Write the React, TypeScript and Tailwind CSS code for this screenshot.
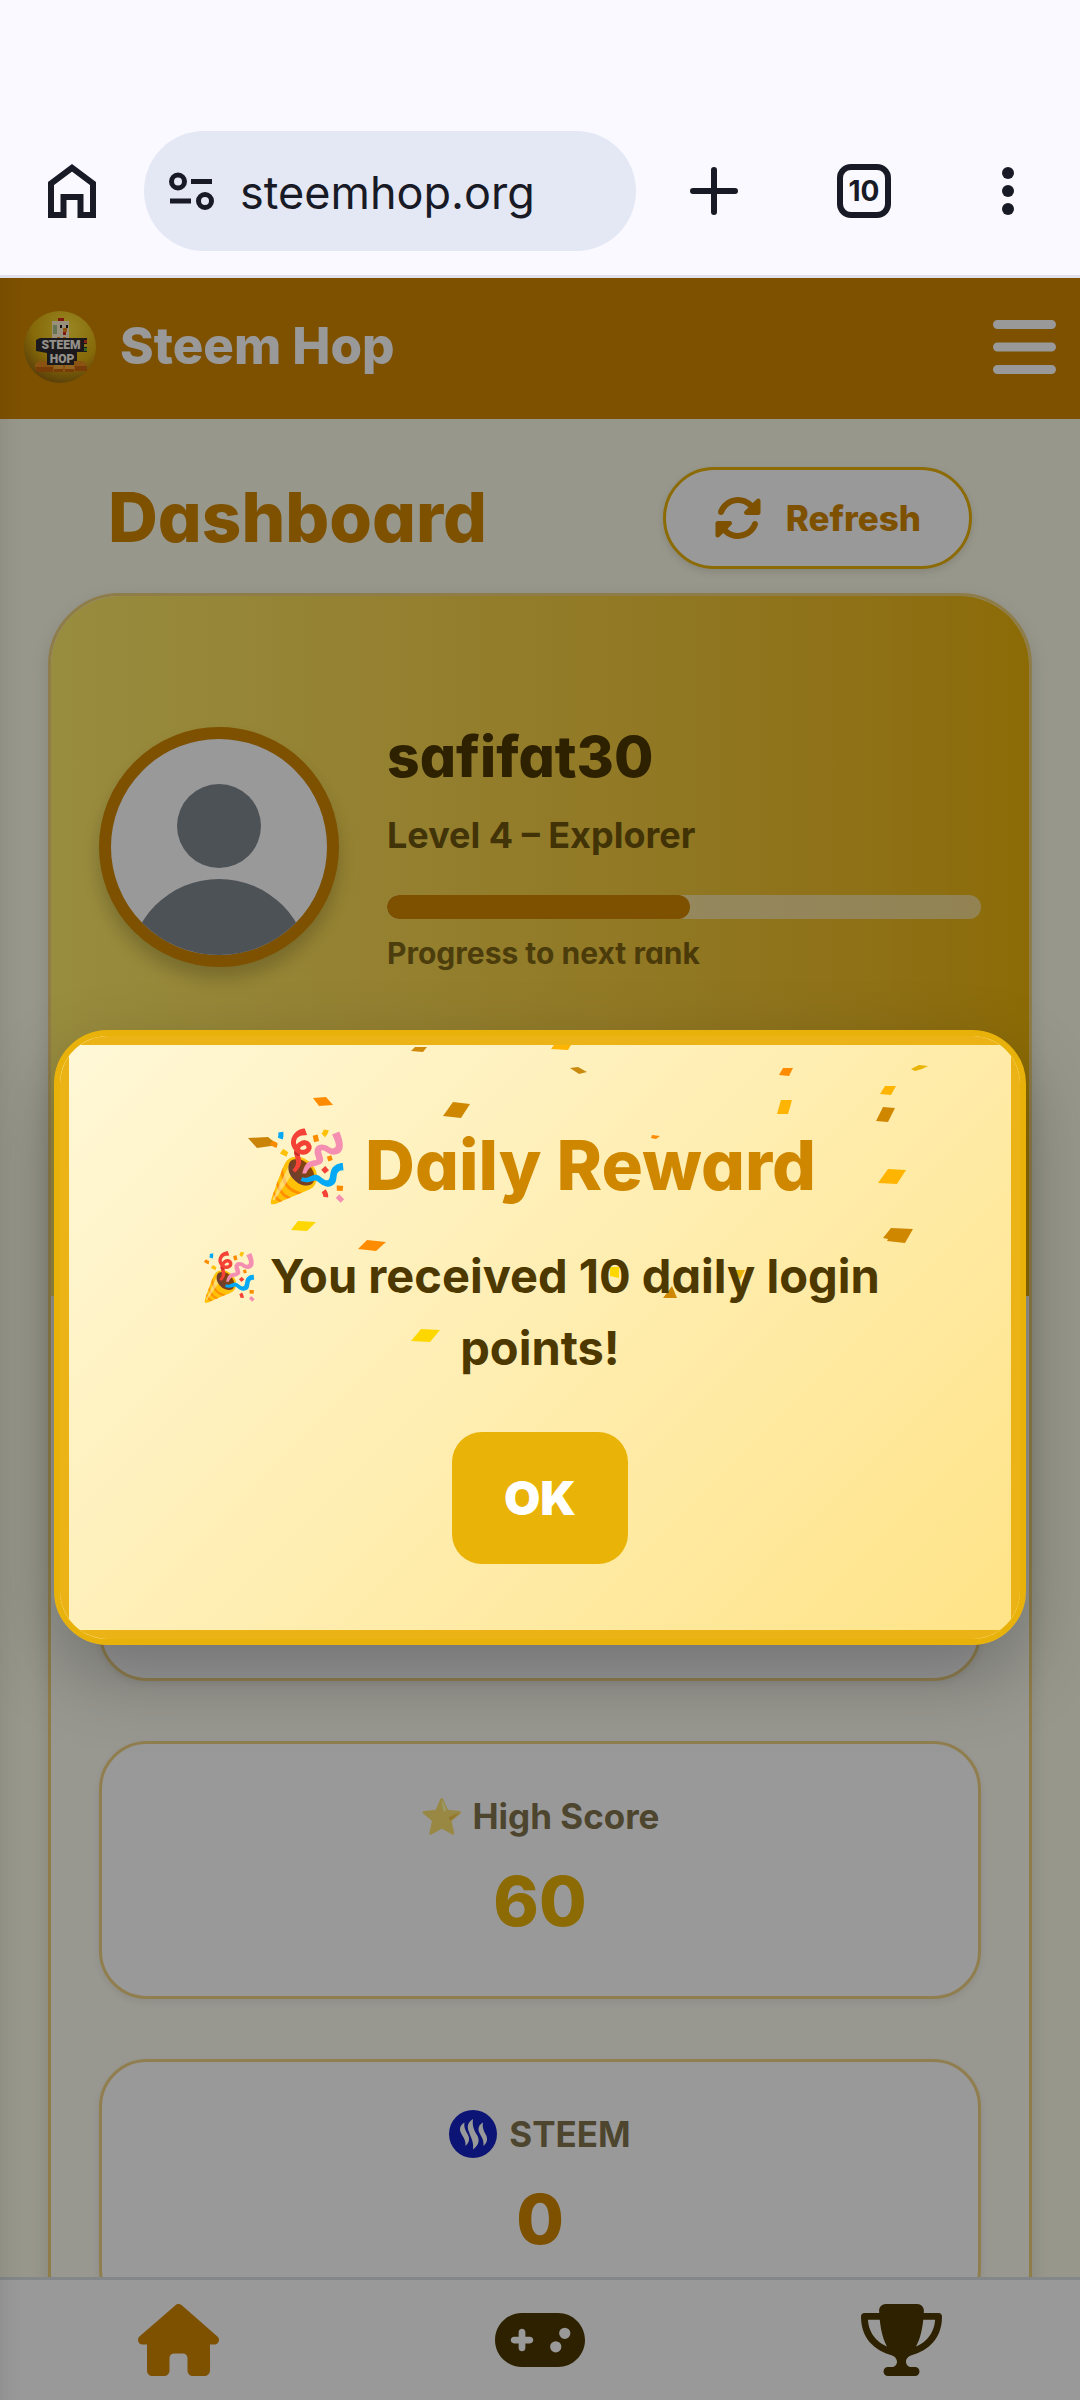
import { FaBars, FaGamepad, FaHouse, FaRotate, FaTrophy } from "react-icons/fa6";
import type { ReactNode } from "react";

const BrowserBar = () => {
  return (
    <div className="flex shrink-0 items-center border-b-3 border-[#e0e1ec] bg-[#f9f9ff] pt-[131px] pb-6 pl-12 pr-[54px] text-[#181a26]">
      <button aria-label="Home" className="w-12 h-[54px]">
        <svg viewBox="0 0 48 54" className="w-12 h-[54px]" fill="none" stroke="currentColor" strokeWidth="6">
          <path d="M3 51V19.5L24 3.8l21 15.7V51H32.500V33h-17v18z" />
        </svg>
      </button>
      <div className="ml-12 flex h-[120px] w-[492px] items-center gap-6 rounded-full bg-[#e4e7f4] px-6">
        <svg viewBox="0 0 48 42" className="w-12 h-[42px] shrink-0" fill="none" stroke="currentColor" strokeWidth="5">
          <circle cx="10" cy="11.500" r="6.500" />
          <circle cx="37" cy="31" r="6.500" />
          <path d="M23 11.500h21M2 31h21" />
        </svg>
        <input
          aria-label="Address"
          type="text"
          defaultValue="steemhop.org"
          className="w-full min-w-0 pt-1 font-['Inter',sans-serif] text-[45px] outline-none"
        />
      </div>
      <div className="flex flex-1 items-center justify-between pl-[54px]">
        <button aria-label="New tab">
          <svg viewBox="0 0 48 48" className="w-12 h-12" stroke="currentColor" strokeWidth="6" strokeLinecap="round">
            <path d="M24 3v42M3 24h42" />
          </svg>
        </button>
        <button className="flex h-[54px] w-[54px] items-center justify-center rounded-[14px] border-6 border-[#181a26] font-['Inter',sans-serif] text-[28px] font-bold">
          10
        </button>
        <button aria-label="Menu">
          <svg viewBox="0 0 36 48" className="w-9 h-12" fill="currentColor">
            <circle cx="18" cy="6" r="6" />
            <circle cx="18" cy="24" r="6" />
            <circle cx="18" cy="42" r="6" />
          </svg>
        </button>
      </div>
    </div>
  );
};

const Logo = () => {
  return (
    <svg viewBox="0 0 72 72" className="w-[72px] h-[72px]">
      <defs>
        <radialGradient id="ball" cx="0.6" cy="0.25" r="0.8">
          <stop offset="0" stopColor="#ffe23a" />
          <stop offset="0.6" stopColor="#e0b010" />
          <stop offset="1" stopColor="#8f6410" />
        </radialGradient>
      </defs>
      <circle cx="36" cy="36" r="36" fill="url(#ball)" />
      <path d="M34 7h6v4h-6z" fill="#d62b1c" />
      <path d="M28 10h17v17H28z" fill="#fff0cf" />
      <path d="M29 14h4v9h-4z" fill="#a9c48c" />
      <path d="M36 14h2v3h-2zM42 14h2v3h-2z" fill="#1d1a18" />
      <path d="M39 17h4v4h-4z" fill="#f08a1c" />
      <path d="M39 21h3v3h-3z" fill="#d62b1c" />
      <path d="M33 26h3v3h-3zM39 26h3v3h-3z" fill="#f08a1c" />
      <path d="M12 29l4-2h47v14H53v13H23V42l-11-2z" fill="#2d2b2e" />
      <path d="M60 29h3v3h-3z" fill="#e23b25" />
      <path d="M60 33h3v3h-3z" fill="#e8c22c" />
      <path d="M60 37h3v3h-3z" fill="#5aa832" />
      <path d="M11 53l4-3h8v4h27v-4h9l4 4v6H12z" fill="#e88a1e" />
      <path d="M12 56h17v5H12zM30 56h9v5h-9zM41 56h9v5h-9zM51 55h12v5H51z" fill="#c9640f" />
      <path d="M30 54h9v4h-9zM41 54h9v4h-9z" fill="#f5a93a" />
      <g fill="#f7f1e6" fontSize="12" textAnchor="middle" className="font-['Roboto',sans-serif] font-black">
        <text x="37" y="38">STEEM</text>
        <text x="38" y="52">HOP</text>
      </g>
    </svg>
  );
};

const SteemIcon = () => {
  return (
    <svg viewBox="0 0 48 48" className="w-12 h-12">
      <circle cx="24" cy="24" r="24" fill="#1524c4" />
      <g fill="#fff">
        <path d="M15.500 12.500C11 15 10 19 12 23c2 4 5 7 4.500 13 3.500-3 4.500-7 2.500-11-2-4-4.500-7-3.500-12.500z" />
        <path d="M24 9c-6 4-6 8-4 13 2 6 5 10 4 17.500 6-4.500 7-9.500 4-14.500-3-5-5-9-4-16z" />
        <path d="M34 12.500c-4.500 2.500-5.500 6.500-3.500 10.500 2 4 4.500 7 4 13 3.500-3 4.500-7 2.500-11-2-4-4-7-3-12.500z" />
      </g>
    </svg>
  );
};

const Avatar = () => {
  return (
    <div className="h-60 w-60 shrink-0 overflow-hidden rounded-full border-12 border-[#d08700] bg-white shadow-[0_12px_18px_rgba(0,0,0,0.2)]">
      <svg viewBox="0 0 216 216" fill="#808992">
        <circle cx="108" cy="87" r="42" />
        <circle cx="108" cy="230" r="90" />
      </svg>
    </div>
  );
};

type StatProps = { icon?: ReactNode; label?: string; value?: string; color?: string };

const StatCard = ({ icon, label, value, color }: StatProps) => {
  return (
    <div className="flex h-[258px] shrink-0 flex-col items-center rounded-[48px] border-3 border-[#f0d384] bg-white pt-12 shadow-[0_3px_9px_rgba(0,0,0,0.08)]">
      <div className="flex h-12 items-center gap-3 text-[35px] font-bold">
        {icon}
        <p className="opacity-70">{label}</p>
      </div>
      <p className={`mt-4 text-[69px] leading-[90px] font-extrabold ${color}`}>{value}</p>
    </div>
  );
};

const confetti = [
  { points: "346,2 358,2 354,7 342,6", fill: "#d08a0a" },
  { points: "485,0 502,0 499,5 482,4", fill: "#ffb400" },
  { points: "501,23 509,22 518,27 510,29", fill: "#c98a10" },
  { points: "714,23 724,23 720,31 710,30", fill: "#ff8c00" },
  { points: "842,24 850,20 859,21 853,24 846,26", fill: "#eab308" },
  { points: "816,41 827,41 822,50 811,49", fill: "#ffb400" },
  { points: "712,55 723,55 719,69 708,69", fill: "#ffb400" },
  { points: "814,62 826,63 819,77 807,76", fill: "#d08700" },
  { points: "244,53 257,52 264,60 250,61", fill: "#ff8c00" },
  { points: "384,57 401,59 392,73 374,71", fill: "#d08700" },
  { points: "179,93 199,92 209,100 188,103", fill: "#c98408" },
  { points: "583,90 591,91 587,94 582,93", fill: "#ff8c00" },
  { points: "819,124 837,125 828,139 809,138", fill: "#ffb400" },
  { points: "822,183 844,184 836,198 818,196 819,194 814,193", fill: "#d08700" },
  { points: "229,176 247,177 238,186 222,185", fill: "#ffd700" },
  { points: "298,195 317,197 307,206 289,204", fill: "#ff8c00" },
  { points: "541,222 550,222 550,233 541,231", fill: "#ffd700" },
  { points: "665,225 676,225 671,235", fill: "#eab308" },
  { points: "594,253 603,241 608,253", fill: "#d08700" },
  { points: "352,284 371,285 361,297 342,296", fill: "#ffd700" },
];

const RewardDialog = () => {
  return (
    <div role="dialog" aria-label="Daily Reward" className="w-9/10 overflow-hidden rounded-[54px] border-6 border-[#e9b20a] bg-linear-135 from-[#fff8d8] to-[#ffe386] shadow-[0_30px_75px_rgba(0,0,0,0.25)]">
      <div className="relative flex flex-col items-center border-9 border-[#ebb316] pt-[72px] pb-[66px]">
        <svg viewBox="0 0 942 585" className="absolute inset-0 h-full w-full">
          {confetti.map((c) => (
            <polygon key={c.points} points={c.points} fill={c.fill} />
          ))}
        </svg>
        <h2 className="relative text-[69px] leading-[96px] font-extrabold text-[#d08700]">🎉 Daily Reward</h2>
        <p className="relative mt-[27px] w-[720px] text-center text-[47px] leading-[72px] font-bold text-[#4d3800]">
          🎉 You received 10 daily login points!
        </p>
        <button className="relative mt-12 h-[132px] w-44 rounded-[30px] bg-[#eab308] text-[47px] font-black text-white">OK</button>
      </div>
    </div>
  );
};

export default function App() {
  return (
    <div className="flex h-screen flex-col overflow-hidden">
      <BrowserBar />
      <div className="relative flex min-h-0 flex-1 flex-col bg-[#fefce8] font-['Inter','Noto_Color_Emoji',sans-serif] text-[#4d3800] [font-feature-settings:'cv11']">
        <header className="flex h-[141px] shrink-0 items-center gap-6 bg-[#d08700] px-6 pb-1 text-white">
          <Logo />
          <h1 className="flex-1 text-[51px] font-extrabold">Steem Hop</h1>
          <button aria-label="Open menu">
            <FaBars className="h-[72px] w-[63px]" />
          </button>
        </header>

        <main className="min-h-0 flex-1 overflow-hidden px-12 pt-12">
          <div className="flex h-[102px] items-center justify-between px-[60px]">
            <h2 className="text-[69px] font-extrabold text-[#d08700]">Dashboard</h2>
            <button className="flex h-full items-center gap-6 rounded-full border-3 border-[#eab308] bg-white px-12 text-[35px] font-extrabold text-[#d08700] shadow-[0_3px_9px_rgba(0,0,0,0.12)]">
              <FaRotate className="h-12 w-12" />
              Refresh
            </button>
          </div>

          <section className="mt-6 overflow-hidden rounded-[72px] border-3 border-[#eed07a] bg-[#fefdf2] shadow-[0_6px_18px_rgba(0,0,0,0.12)]">
            <div className="flex items-start gap-12 bg-linear-to-r from-[#feea69] to-[#eab308] px-12 pt-[131px] pb-[325px]">
              <Avatar />
              <div className="min-w-0 flex-1">
                <p className="text-[57px] leading-[60px] font-extrabold">safifat30</p>
                <p className="mt-6 text-4xl leading-[48px] font-bold opacity-80">Level 4 – Explorer</p>
                <div className="mt-9 h-6 overflow-hidden rounded-full bg-white/50">
                  <div className="h-full w-[51%] rounded-full bg-[#d08700]" />
                </div>
                <p className="mt-4 text-[30px] leading-[36px] font-bold opacity-70">Progress to next rank</p>
              </div>
            </div>
            <div className="flex flex-col gap-[60px] px-12 pt-[127px] pb-12">
              <StatCard />
              <StatCard label="⭐ High Score" value="60" color="text-[#eab308]" />
              <StatCard icon={<SteemIcon />} label="STEEM" value="0" color="text-[#d08700]" />
            </div>
          </section>
        </main>

        <nav className="flex shrink-0 items-center justify-around border-t-3 border-[#dde1e6] bg-white py-6">
          <a href="#home" aria-label="Home">
            <FaHouse className="h-[72px] w-[81px] text-[#d08700]" />
          </a>
          <a href="#play" aria-label="Play">
            <FaGamepad className="h-[72px] w-[90px]" />
          </a>
          <a href="#leaderboard" aria-label="Leaderboard">
            <FaTrophy className="h-[72px] w-[81px]" />
          </a>
        </nav>

        <div className="absolute inset-0 flex items-center justify-center bg-black/40 pb-[3px] shadow-[inset_24px_0_24px_-24px_rgba(0,0,0,0.1)]">
          <RewardDialog />
        </div>
      </div>
    </div>
  );
}
